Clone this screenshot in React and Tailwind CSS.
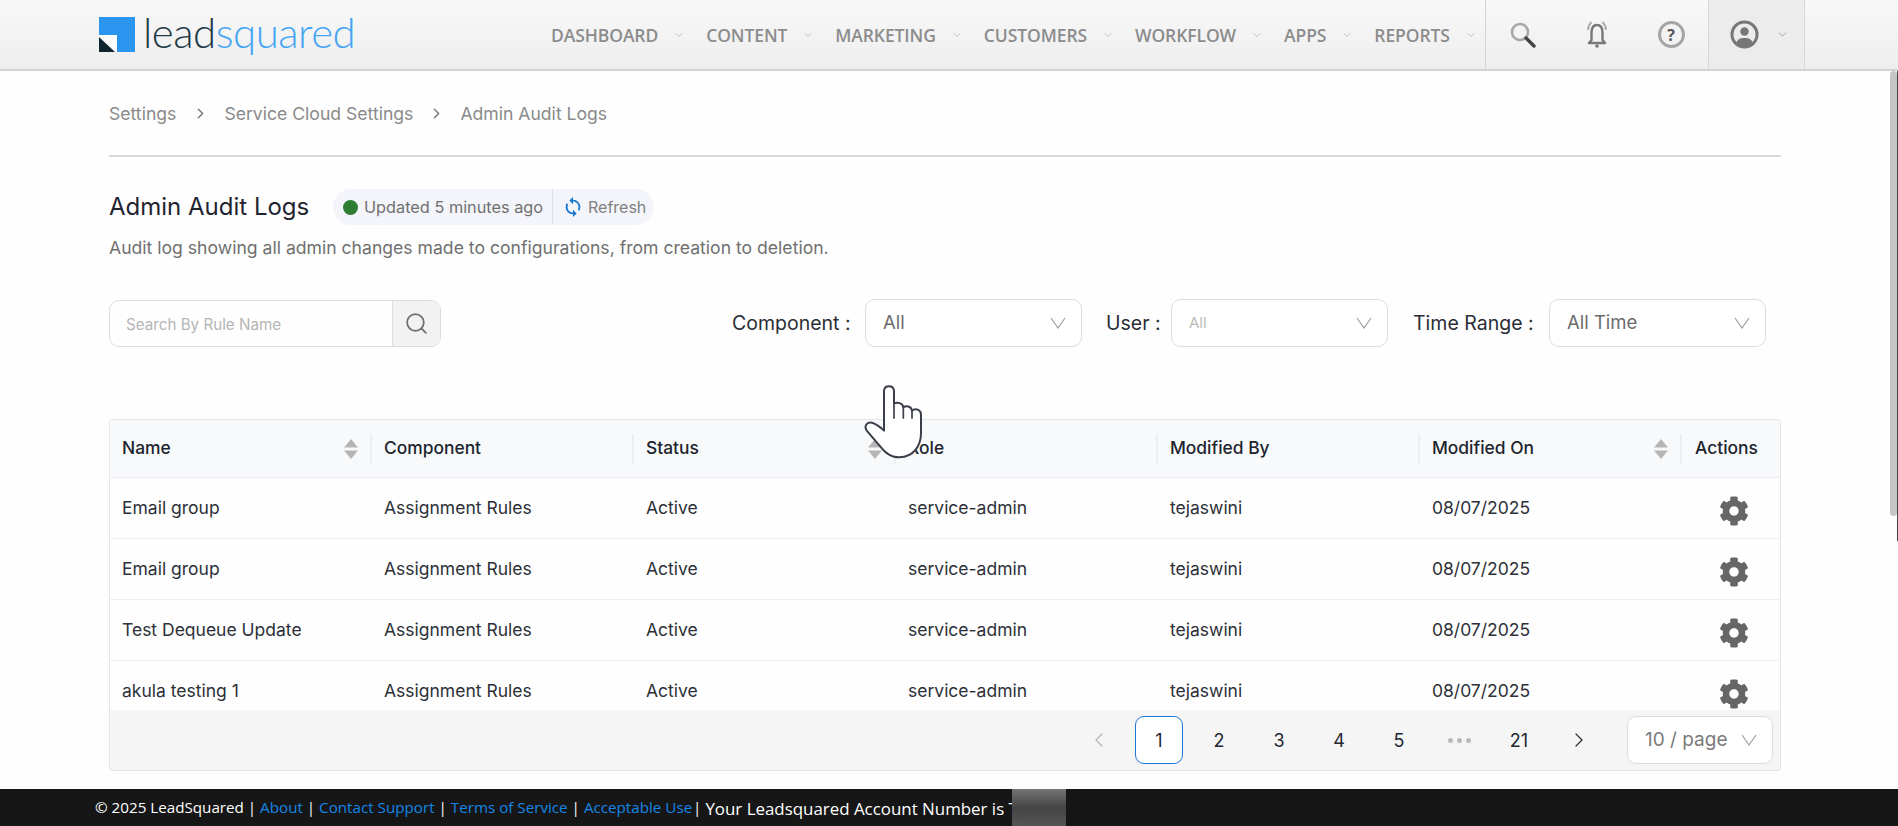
import React from 'react';
import { ChevronDown, ChevronLeft, ChevronRight, Search } from 'lucide-react';
import { FaCog } from 'react-icons/fa';
import { MdSync } from 'react-icons/md';

const NAV = ['DASHBOARD', 'CONTENT', 'MARKETING', 'CUSTOMERS', 'WORKFLOW', 'APPS', 'REPORTS'];

const ROWS = [
  ['Email group', 'Assignment Rules', 'Active', 'service-admin', 'tejaswini', '08/07/2025'],
  ['Email group', 'Assignment Rules', 'Active', 'service-admin', 'tejaswini', '08/07/2025'],
  ['Test Dequeue Update', 'Assignment Rules', 'Active', 'service-admin', 'tejaswini', '08/07/2025'],
  ['akula testing 1', 'Assignment Rules', 'Active', 'service-admin', 'tejaswini', '08/07/2025'],
];

const COLUMNS = [
  { label: 'Name', sort: true },
  { label: 'Component' },
  { label: 'Status', sort: true },
  { label: 'Role' },
  { label: 'Modified By' },
  { label: 'Modified On', sort: true },
];

function Logo() {
  return (
    <div className="flex items-center gap-[8px]">
      <svg width="36" height="35" viewBox="0 0 36 35">
        <rect width="36" height="35" fill="#2b95f0" />
        <path d="M0 18H18V35H0Z" fill="#fff" />
        <path d="M0 20L16 35H0Z" fill="#10252e" />
      </svg>
      <div className="font-['Lato',sans-serif] text-[42px] leading-none tracking-[-0.5px] font-light mt-[-6px]">
        <span className="text-[#1d3a48]">lead</span>
        <span className="text-[#45a5f5]">squared</span>
      </div>
    </div>
  );
}

function SortArrows() {
  return (
    <svg width="14" height="20" viewBox="0 0 14 20" className="text-[#b5b5b5]">
      <path d="M7 0L14 8.5H0Z" fill="currentColor" />
      <path d="M7 20L14 11.5H0Z" fill="currentColor" />
    </svg>
  );
}

function WideChevron() {
  return (
    <svg width="16" height="12" viewBox="0 0 16 12" fill="none" className="text-[#9a9a9a]">
      <path d="M1 1L8 11L15 1" stroke="currentColor" strokeWidth="1.1" />
    </svg>
  );
}

function SelectBox({ value, width, muted }) {
  return (
    <div className={`flex items-center justify-between h-[48px] ${width} rounded-[10px] border border-[#dcdcdc] bg-white pl-[17px] pr-[15px]`}>
      <span className={muted ? 'text-[15px] text-[#bdbdbd]' : 'text-[18.5px] text-[#6b6b6b]'}>{value}</span>
      <WideChevron />
    </div>
  );
}

function HandCursor() {
  return (
    <svg width="120" height="100" viewBox="0 0 360 300" className="absolute left-[840px] top-[370px]">
      <path
        d="M132 62C134 44 160 44 162 62V100C172 96 188 98 190 112C198 106 214 108 216 122C226 114 243 118 243 134V190C243 225 222 262 178 262C150 262 134 246 118 226L82 184C70 170 80 154 96 158C110 162 122 172 132 182Z"
        fill="#fff"
        stroke="#3b3f4a"
        strokeWidth="6"
        strokeLinejoin="round"
      />
      <path d="M162 100V146M190 112V146M216 122V146" fill="none" stroke="#3b3f4a" strokeWidth="5" />
    </svg>
  );
}

export default function App() {
  return (
    <div className="relative h-[826px] w-[1898px] overflow-hidden bg-[#fefefe] font-['Inter',sans-serif] flex flex-col">
      {/* Top bar */}
      <header className="h-[71px] shrink-0 flex items-stretch border-b-2 border-[#d2d2d2] bg-linear-to-b from-[#f8f8f9] to-[#eeeeee] font-['Open_Sans',sans-serif]">
        <div className="w-[99px] shrink-0" />
        <div className="w-[452px] shrink-0 flex items-center">
          <Logo />
        </div>
        <nav className="w-[934px] shrink-0 flex items-center pt-px">
          {NAV.map((item) => (
            <div key={item} className="flex items-center gap-[15px] mr-[21px]">
              <span className="text-[17.5px] font-semibold text-[#8c8c8c] tracking-[-0.1px]">{item}</span>
              <ChevronDown size={12} className="text-[#c0c0c0]" />
            </div>
          ))}
        </nav>
        <div className="w-[223px] shrink-0 border-l border-[#d4d4d4] flex items-center text-[#777]">
          <div className="w-[74px] flex justify-center">
            <svg width="28" height="28" viewBox="0 0 28 28" fill="none">
              <circle cx="11" cy="11" r="8" stroke="#a8a8a8" strokeWidth="2.6" />
              <path d="M17 17L25 25" stroke="#444" strokeWidth="3.4" strokeLinecap="round" />
            </svg>
          </div>
          <div className="w-[74px] flex justify-center">
            <svg width="28" height="30" viewBox="0 0 28 30" fill="none" stroke="#777" strokeWidth="2.4">
              <path d="M14 5C9.5 5 8.5 9 8.5 13V20L6 23H22L19.5 20V13C19.5 9 18.5 5 14 5Z" strokeLinejoin="round" />
              <circle cx="14" cy="26" r="1.8" fill="#777" stroke="none" />
              <path d="M5 10C5 7 6.5 4 8.5 2M23 10C23 7 21.5 4 19.5 2" strokeWidth="1.8" stroke="#aaa" />
            </svg>
          </div>
          <div className="w-[74px] flex justify-center">
            <div className="flex h-[27px] w-[27px] items-center justify-center rounded-full border-[3px] border-[#a5a5a5] text-[16px] font-bold text-[#555]">?</div>
          </div>
        </div>
        <div className="w-[97px] shrink-0 border-x border-[#d8d8d8] bg-[#ececec] flex items-center pl-[21px] gap-[17px]">
          <svg width="29" height="29" viewBox="0 0 29 29" fill="none">
            <circle cx="14.5" cy="14.5" r="12.5" stroke="#777" strokeWidth="3" />
            <circle cx="14.5" cy="11.5" r="4.2" fill="#777" />
            <path d="M6 24C7 19 10 18 14.5 18S22 19 23 24L14.5 27Z" fill="#777" />
          </svg>
          <ChevronDown size={13} className="text-[#c0c0c0]" />
        </div>
        <div className="flex-1" />
      </header>

      <div className="flex-1 min-h-0 flex">
        <main className="flex-1 min-w-0 pl-[109px] pr-[109px]">
          {/* Breadcrumb */}
          <div className="h-[86px] border-b-2 border-[#d9d9d9] pt-[30px] flex items-start text-[17.6px] text-[#8a8a8a]">
            <span>Settings</span>
            <ChevronRight size={17} className="mx-[15.5px] mt-[4px] text-[#777]" />
            <span>Service Cloud Settings</span>
            <ChevronRight size={17} className="mx-[15px] mt-[4px] text-[#777]" />
            <span>Admin Audit Logs</span>
          </div>

          {/* Title */}
          <div className="mt-[32px] flex items-center h-[36px]">
            <h1 className="text-[24px] text-[#1f2430] w-[224px] whitespace-nowrap">Admin Audit Logs</h1>
            <div className="flex h-[36px] items-center rounded-full bg-[#f3f5fa] text-[16px] text-[#707070]">
              <span className="ml-[10px] h-[15px] w-[15px] rounded-full bg-[#2e7d32]" />
              <span className="ml-[6px] w-[188px] whitespace-nowrap text-[16.3px]">Updated 5 minutes ago</span>
              <span className="h-[36px] w-px bg-[#dcdfe6]" />
              <MdSync size={22} className="ml-[9px] text-[#1976d2]" />
              <span className="ml-[4px] mr-[8px] text-[#808080]">Refresh</span>
            </div>
          </div>
          <p className="mt-[12px] text-[17.6px] leading-[22px] text-[#707070]">
            Audit log showing all admin changes made to configurations, from creation to deletion.
          </p>

          {/* Filters */}
          <div className="mt-[40px] flex items-center h-[48px]">
            <div className="flex h-[47px] w-[332px] overflow-hidden rounded-[10px] border border-[#dcdcdc]">
              <div className="flex-1 flex items-center pl-[16px] pt-[4px] text-[15.2px] text-[#b5b5b5]">Search By Rule Name</div>
              <div className="w-[48px] flex items-center justify-center border-l border-[#dcdcdc] bg-[#f2f2f2]">
                <Search size={25} strokeWidth={1.7} className="text-[#6f6f6f]" />
              </div>
            </div>
            <span className="ml-[291px] w-[133px] mt-px text-[19.5px] text-[#2a2d35] whitespace-nowrap">Component :</span>
            <SelectBox value="All" width="w-[217px]" />
            <span className="ml-[24px] w-[65px] mt-px text-[19.5px] text-[#2a2d35] whitespace-nowrap">User :</span>
            <SelectBox value="All" width="w-[217px]" muted />
            <span className="ml-[25px] w-[136px] mt-px text-[19.5px] text-[#2a2d35] whitespace-nowrap">Time Range :</span>
            <SelectBox value="All Time" width="w-[217px]" />
          </div>

          {/* Table */}
          <div className="mt-[72px] h-[352px] w-[1672px] overflow-hidden rounded-[3px] border border-[#e3e5ea] flex flex-col">
            <div className="flex h-[58px] shrink-0 border-b border-[#eceef3] bg-[#f8f9fb]">
              {COLUMNS.map((col) => (
                <div key={col.label} className="w-[262px] flex items-center">
                  <div className="flex h-[30px] w-full items-center justify-between border-r-2 border-[#eceef2] pl-[12px] pr-[12px] text-[17.4px] font-medium text-[#20242e]">
                    <span>{col.label}</span>
                    {col.sort && <SortArrows />}
                  </div>
                </div>
              ))}
              <div className="flex-1 flex items-center pl-[13px] text-[17.4px] font-medium text-[#20242e]">Actions</div>
            </div>
            <div className="flex-1 min-h-0 overflow-hidden">
              {ROWS.map((row, i) => (
                <div key={i} className="flex h-[61px] border-b border-[#eef0f6] text-[17.5px] text-[#2d3038]">
                  {row.map((cell, j) => (
                    <div key={j} className="w-[262px] pl-[12px] pt-[19px] leading-[22px]">{cell}</div>
                  ))}
                  <div className="flex-1 flex justify-center pt-[18px] pl-[5px]">
                    <FaCog size={30} className="text-[#666]" />
                  </div>
                </div>
              ))}
            </div>
            <div className="flex h-[60px] shrink-0 items-center bg-[#f5f5f5] text-[18px] text-[#24272f]">
              <div className="w-[965px] shrink-0" />
              <div className="w-[48px] flex justify-center">
                <ChevronLeft size={24} strokeWidth={1.3} className="text-[#b5b5b5]" />
              </div>
              <div className="ml-[12px] flex h-[48px] w-[48px] items-center justify-center rounded-[9px] border border-[#1976d2] bg-white">1</div>
              {['2', '3', '4', '5'].map((n) => (
                <div key={n} className="ml-[12px] flex h-[48px] w-[48px] items-center justify-center">{n}</div>
              ))}
              <div className="ml-[12px] flex h-[48px] w-[48px] items-center justify-center gap-[4px]">
                <span className="h-[5px] w-[5px] rounded-full bg-[#b8b8b8]" />
                <span className="h-[5px] w-[5px] rounded-full bg-[#b8b8b8]" />
                <span className="h-[5px] w-[5px] rounded-full bg-[#b8b8b8]" />
              </div>
              <div className="ml-[12px] flex h-[48px] w-[48px] items-center justify-center">21</div>
              <div className="ml-[12px] flex h-[48px] w-[48px] items-center justify-center">
                <ChevronRight size={24} strokeWidth={1.3} className="text-[#333]" />
              </div>
              <div className="ml-[24px] flex h-[48px] w-[146px] items-center justify-between rounded-[9px] border border-[#dcdcdc] bg-white pl-[17px] pr-[15px] text-[19px] text-[#7a7a7a]">
                <span className="whitespace-nowrap">10 / page</span>
                <WideChevron />
              </div>
            </div>
          </div>
        </main>

        {/* Scrollbar */}
        <div className="w-[8px] shrink-0 flex items-start">
          <div className="h-[445px] w-[7px] rounded-full bg-[#c6c6c6]" />
          <div className="h-[470px] w-px bg-[#444]" />
        </div>
      </div>

      {/* Footer */}
      <footer className="h-[37px] shrink-0 bg-[#161616] flex items-center pl-[95px] text-[15.2px] text-white font-['Open_Sans',sans-serif] whitespace-nowrap">
        <span>© 2025 LeadSquared |&nbsp;</span>
        <span className="text-[#1587e6]">About</span>
        <span>&nbsp;|&nbsp;</span>
        <span className="text-[#1587e6]">Contact Support</span>
        <span>&nbsp;|&nbsp;</span>
        <span className="text-[#1587e6]">Terms of Service</span>
        <span>&nbsp;|&nbsp;</span>
        <span className="text-[#1587e6]">Acceptable Use</span>
        <span className="ml-[-3px]">&nbsp;|&nbsp;</span>
        <span className="text-[16.9px] mt-[2px]">Your Leadsquared Account Number is T</span>
        <div className="relative ml-[-6px] h-[38px] w-[54px] bg-linear-to-b from-[#757575] via-[#444] to-[#555]" />
      </footer>

      <HandCursor />
    </div>
  );
}
